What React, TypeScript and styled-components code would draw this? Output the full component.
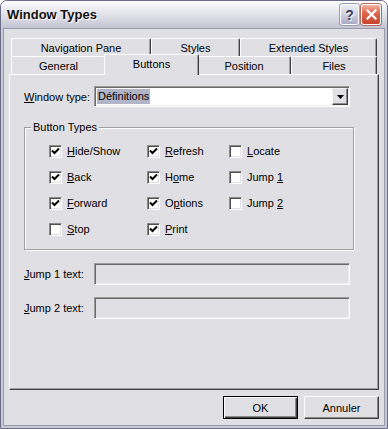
import React from 'react';
import styled, {createGlobalStyle} from 'styled-components';

const GlobalStyle = createGlobalStyle`
  html, body {
    margin: 0;
    padding: 0;
    background: #fff;
  }
  body {
    font-family: "Liberation Sans", Arial, sans-serif;
    font-size: 11px;
    color: #000;
  }
`;

const Window = styled.div`
  width: 388px;
  height: 429px;
  box-sizing: border-box;
  border: 1px solid #6d6d8b;
  border-radius: 7px 7px 0 0;
  background: #c9c9d6;
  padding: 0 2px 2px;
  display: flex;
  flex-direction: column;
  overflow: hidden;
`;

const TitleBar = styled.div`
  flex: none;
  height: 27px;
  margin: 0 -2px;
  padding: 0 6px 0 6px;
  display: flex;
  align-items: center;
  background: linear-gradient(#fdfdfe, #ececf2 30%, #dadae4 65%, #c3c3d2);
`;

const Title = styled.div`
  font-size: 13px;
  font-weight: bold;
  color: #111;
  text-shadow: 1px 1px 0 #fff;
`;

const TitleButtons = styled.div`
  margin-left: auto;
  display: flex;
  gap: 2px;
`;

const HelpButton = styled.div`
  width: 19px;
  height: 21px;
  box-sizing: border-box;
  border: 1px solid #fff;
  border-radius: 3px;
  background: linear-gradient(#eeeef6, #cdcde0 55%, #a9a9c2);
  box-shadow: 0 0 0 1px #9a9ab4;
  display: flex;
  align-items: center;
  justify-content: center;
  font-size: 14px;
  font-weight: bold;
  color: #3a3a58;
  text-shadow: 1px 1px 0 #fff;
`;

const CloseButton = styled.div`
  width: 20px;
  height: 21px;
  box-sizing: border-box;
  border: 1px solid #fff;
  border-radius: 3px;
  background: linear-gradient(#f2b4a4, #e06850 40%, #c8442e);
  box-shadow: 0 0 0 1px #b06a60;
  display: flex;
  align-items: center;
  justify-content: center;
`;

const Body = styled.div`
  flex: 1;
  background: #e0dfe3;
  border: 1px solid #9a9aae;
  padding: 9px 5px 6px 5px;
  display: flex;
  flex-direction: column;
`;

const TabRow = styled.div`
  display: flex;
  align-items: flex-start;
  height: 18px;
  margin-left: 2px;
`;

const Tab = styled.div<{$w: number; $active?: boolean}>`
  flex: none;
  box-sizing: border-box;
  width: ${p => p.$w + (p.$active ? 4 : 0)}px;
  height: ${p => (p.$active ? 21 : 18)}px;
  margin: ${p => (p.$active ? '-2px -2px 0' : '0')};
  padding-bottom: ${p => (p.$active ? 3 : 0)}px;
  position: ${p => (p.$active ? 'relative' : 'static')};
  z-index: ${p => (p.$active ? 2 : 'auto')};
  background: #e0dfe3;
  border-top: 1px solid #fff;
  border-left: 1px solid #fff;
  border-right: 1px solid #404040;
  box-shadow: inset -1px 0 0 #a0a0a0;
  border-radius: 2px 2px 0 0;
  display: flex;
  align-items: center;
  justify-content: center;
  white-space: nowrap;
`;

const Panel = styled.div`
  position: relative;
  z-index: 1;
  flex: none;
  height: 316px;
  box-sizing: border-box;
  border: 1px solid;
  border-color: #fff #404040 #404040 #fff;
  box-shadow: inset -1px -1px 0 #a0a0a0;
  padding: 11px 0 0 14px;
`;

const FieldRow = styled.div<{$mt?: number}>`
  display: flex;
  align-items: center;
  margin-top: ${p => p.$mt || 0}px;
`;

const FieldLabel = styled.div`
  width: 70px;
  flex: none;
`;

const Key = styled.span`
  text-decoration: underline;
  text-underline-offset: 1px;
`;

const Sunken = styled.div<{$h: number; $bg?: string}>`
  width: 256px;
  height: ${p => p.$h}px;
  box-sizing: border-box;
  border: 1px solid;
  border-color: #9a9a9a #fff #fff #9a9a9a;
  box-shadow: inset 1px 1px 0 #6a6a6a, inset -1px -1px 0 #ecebef;
  background: ${p => p.$bg || '#fff'};
  display: flex;
  align-items: center;
  padding: 1px 1px 1px 2px;
`;

const Selected = styled.span`
  background: #b2b4c8;
  line-height: 15px;
  padding: 0 1px;
`;

const DropButton = styled.div`
  margin-left: auto;
  width: 16px;
  height: 17px;
  box-sizing: border-box;
  background: #e0dfe3;
  border: 1px solid;
  border-color: #f4f4f4 #404040 #404040 #f4f4f4;
  box-shadow: inset -1px -1px 0 #8a8a8a;
  display: flex;
  align-items: center;
  justify-content: center;
`;

const GroupBox = styled.fieldset`
  margin: 14px 0 0 0;
  padding: 0;
  width: 330px;
  box-sizing: border-box;
  border: 1px solid #a0a0a0;
  box-shadow: inset 1px 1px 0 #fff, 1px 1px 0 #fff;
`;

const Legend = styled.legend`
  margin-left: 6px;
  padding: 0 2px;
  line-height: 13px;
  background: #e0dfe3;
`;

const CheckGrid = styled.div`
  display: grid;
  grid-template-columns: 98px 82px 1fr;
  grid-auto-rows: 26px;
  padding: 4px 0 7px 24px;
`;

const CheckItem = styled.div`
  display: flex;
  align-items: center;
  gap: 5px;
`;

const Box = styled.div`
  width: 13px;
  height: 13px;
  box-sizing: border-box;
  background: #fff;
  border: 1px solid;
  border-color: #8a8a8a #fff #fff #8a8a8a;
  box-shadow: inset 1px 1px 0 #505050, inset -1px -1px 0 #e0dfe3;
  display: flex;
  align-items: center;
  justify-content: center;
`;

const ButtonRow = styled.div`
  display: flex;
  justify-content: flex-end;
  gap: 6px;
  margin-top: 6px;
`;

const PushButton = styled.div<{$default?: boolean}>`
  width: 75px;
  height: 23px;
  box-sizing: border-box;
  background: #e0dfe3;
  border: 1px solid;
  border-color: ${p => (p.$default ? '#000' : '#fff #404040 #404040 #fff')};
  box-shadow: ${p =>
    p.$default
      ? 'inset 1px 1px 0 #fff, inset -1px -1px 0 #404040, inset -2px -2px 0 #8a8a8a'
      : 'inset -1px -1px 0 #8a8a8a'};
  display: flex;
  align-items: center;
  justify-content: center;
`;

const checks = [
  {pre: '', key: 'H', post: 'ide/Show', on: true},
  {pre: '', key: 'R', post: 'efresh', on: true},
  {pre: '', key: 'L', post: 'ocate', on: false},
  {pre: '', key: 'B', post: 'ack', on: true},
  {pre: 'H', key: 'o', post: 'me', on: true},
  {pre: 'Jump ', key: '1', post: '', on: false},
  {pre: '', key: 'F', post: 'orward', on: true},
  {pre: 'O', key: 'p', post: 'tions', on: true},
  {pre: 'Jump ', key: '2', post: '', on: false},
  {pre: '', key: 'S', post: 'top', on: false},
  {pre: '', key: 'P', post: 'rint', on: true},
];

function CheckMark() {
  return (
    <svg width="9" height="9" viewBox="0 0 9 9">
      <path d="M1 3.5 L3.5 6 L8 1.5" fill="none" stroke="#000" strokeWidth="2" />
    </svg>
  );
}

export default function App() {
  return (
    <>
      <GlobalStyle />
      <Window>
        <TitleBar>
          <Title>Window Types</Title>
          <TitleButtons>
            <HelpButton>?</HelpButton>
            <CloseButton>
              <svg width="11" height="11" viewBox="0 0 11 11">
                <path d="M1.5 1.5 L9.5 9.5 M9.5 1.5 L1.5 9.5" stroke="#fff" strokeWidth="2.2" strokeLinecap="square" />
              </svg>
            </CloseButton>
          </TitleButtons>
        </TitleBar>
        <Body>
          <TabRow>
            <Tab $w={140}>Navigation Pane</Tab>
            <Tab $w={89}>Styles</Tab>
            <Tab $w={137}>Extended Styles</Tab>
          </TabRow>
          <TabRow>
            <Tab $w={95}>General</Tab>
            <Tab $w={91} $active>Buttons</Tab>
            <Tab $w={94}>Position</Tab>
            <Tab $w={86}>Files</Tab>
          </TabRow>
          <Panel>
            <FieldRow>
              <FieldLabel><Key>W</Key>indow type:</FieldLabel>
              <Sunken $h={21}>
                <Selected>Définitions</Selected>
                <DropButton>
                  <svg width="7" height="4" viewBox="0 0 7 4">
                    <path d="M0 0 H7 L3.5 4 Z" fill="#000" />
                  </svg>
                </DropButton>
              </Sunken>
            </FieldRow>
            <GroupBox>
              <Legend>Button Types</Legend>
              <CheckGrid>
                {checks.map((c, i) => (
                  <CheckItem key={i}>
                    <Box>{c.on && <CheckMark />}</Box>
                    <span>{c.pre}<Key>{c.key}</Key>{c.post}</span>
                  </CheckItem>
                ))}
              </CheckGrid>
            </GroupBox>
            <FieldRow $mt={13}>
              <FieldLabel><Key>J</Key>ump 1 text:</FieldLabel>
              <Sunken $h={22} $bg="#e0dfe3" />
            </FieldRow>
            <FieldRow $mt={12}>
              <FieldLabel><Key>J</Key>ump 2 text:</FieldLabel>
              <Sunken $h={22} $bg="#e0dfe3" />
            </FieldRow>
          </Panel>
          <ButtonRow>
            <PushButton $default>OK</PushButton>
            <PushButton>Annuler</PushButton>
          </ButtonRow>
        </Body>
      </Window>
    </>
  );
}
